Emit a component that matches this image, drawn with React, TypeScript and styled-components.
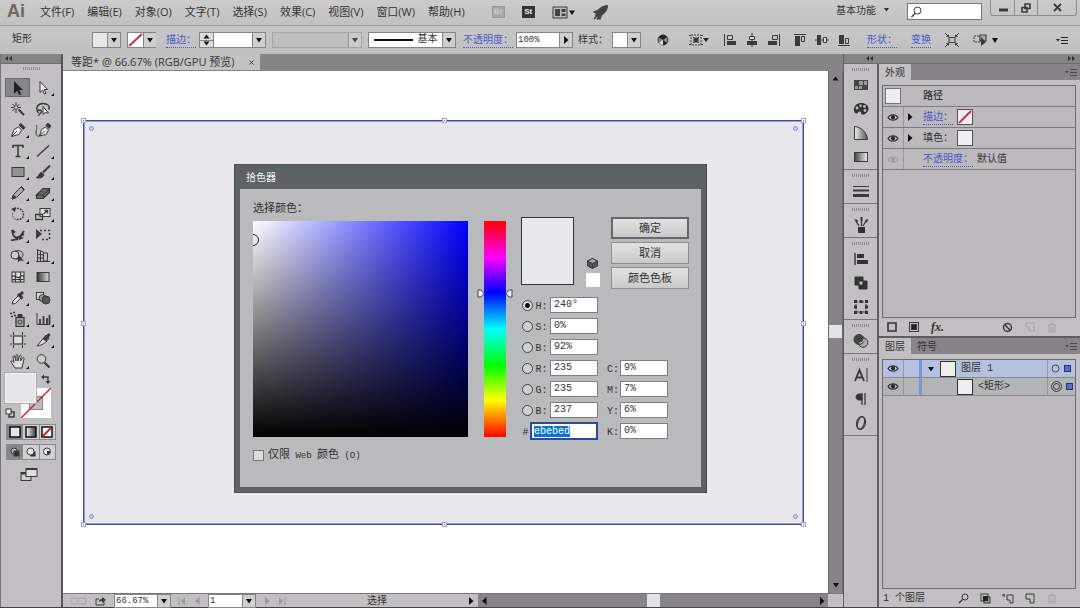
import React, { useEffect, useRef } from 'react';
import styled, { createGlobalStyle, css } from 'styled-components';

const ui = `"Open Sans", "Noto Sans CJK SC", sans-serif`;
const mono = `"Liberation Mono", "Noto Sans CJK SC", monospace`;

const c = {
  bar: '#c3c2c3',
  panel: '#c1bfc1',
  list: '#bbb9bb',
  dark: '#878487',
  line: '#777578',
  ink: '#333',
  link: '#4a57c8',
};

const Global = createGlobalStyle`
  * { box-sizing: border-box; }
  html, body, #root { height: 100%; margin: 0; }
  body { background: ${c.panel}; color: ${c.ink}; font: 10px/14px ${mono}; overflow: hidden; }
  button, input, select { font: inherit; color: inherit; margin: 0; padding: 0; border: 0; border-radius: 0; background: none; }
  button { display: inline-flex; align-items: center; justify-content: center; }
  input { min-width: 0; outline: none; }
  svg { display: block; flex: none; }
  ul { list-style: none; margin: 0; padding: 0; }
`;

/* ---------- icons ---------- */

const Ico = ({ s = 16, w, children }: { s?: number; w?: number; children: React.ReactNode }) => (
  <svg width={w ?? s} height={s} viewBox={`0 0 ${w ?? s} ${s}`} fill="none" stroke="#3a3a3a" strokeWidth="1" aria-hidden="true">
    {children}
  </svg>
);
const K = '#3a3a3a';
const Down = () => <Ico s={6} w={8}><path d="M1 1h6L4 5.500z" fill="#111" stroke="none" /></Ico>;
const Up = () => <Ico s={5} w={7}><path d="M.5 4.500h6L3.500 .5z" fill="#111" stroke="none" /></Ico>;
const Right = ({ color = '#111' }) => <Ico s={8} w={6}><path d="M1 0v8l4.500-4z" fill={color} stroke="none" /></Ico>;
const Left = ({ color = '#111' }) => <Ico s={8} w={6}><path d="M5.500 0v8L1 4z" fill={color} stroke="none" /></Ico>;
const Chevrons = ({ flip = false }) => (
  <Ico s={5} w={8}>
    <path d={flip ? 'M0 0v5l3-2.500zM4 0v5l3-2.500z' : 'M3 0v5L0 2.500zM7 0v5L4 2.500z'} fill="#333" stroke="none" />
  </Ico>
);
const PanelMenu = ({ color = '#4d4b4d' }) => (
  <Ico s={9} w={12}><path d="M0 3h4L2 5.500z" fill={color} stroke="none" /><path d="M5 1.500h7M5 4.500h7M5 7.500h7" stroke={color} /></Ico>
);
const Eye = ({ faint = false }) => (
  <Ico s={9} w={12}>
    <g opacity={faint ? 0.2 : 1}>
      <path d="M1 4.500C3 1 9 1 11 4.500 9 8 3 8 1 4.500z" stroke="#333" strokeWidth="1.200" />
      <circle cx="6" cy="4.300" r="2" fill="#222" stroke="none" />
    </g>
  </Ico>
);

const tools: { name: string; more?: boolean; art: React.ReactNode }[] = [
  { name: '选择工具', art: <path d="M4 1v13l3.200-3.200 2 4.200 2-1-2-4H13z" fill="#222" stroke="none" /> },
  { name: '直接选择工具', more: true, art: <path d="M5 1.500v11l2.600-2.400 1.800 4 1.600-.8-1.800-3.800h3.300z" fill="#eee" /> },
  { name: '魔棒工具', art: <><path d="M8.500 8.500l5.500 5.500" strokeWidth="2" /><path d="M6 1v3M6 9v3M1 6.500h3M8 6.500h3M2.500 3l2 2M9.500 3l-2 2M2.500 10l2-2" /><circle cx="6" cy="6.500" r="1.800" fill="#ddd" /></> },
  { name: '套索工具', art: <><path d="M3.500 12C-.5 7 3 2.500 8 2.500s7.500 3 5.500 6M3 9.500c2-1 4 0 3.500 1.500S3 13 4 15" strokeWidth="1.400" /><path d="M8 5.500v8l2-1.800 3.500.3z" fill="#eee" /></> },
  { name: '钢笔工具', more: true, art: <><path d="M1.500 14.500l2.500-7 4.500-2.500 3 3-2.500 4.500z" fill="#eee" /><path d="M1.500 14.500L7 9" /><path d="M9 3l2-1.500 4 4L13.500 7.500z" fill={K} /></> },
  { name: '曲率工具', art: <><path d="M4.500 14l2-6.500 4-2.500 3 3-2.500 4.500z" fill="#eee" /><path d="M4.500 14l5-5M1 3c2 2 0 5 0 8s2 3.500 3.500 3" /><path d="M11 3.500L13 1l3 3-2 2.500z" fill={K} /></> },
  { name: '文字工具', more: true, art: <path d="M3 5V2.500h10V5M8 2.500v11M5.500 13.500h5" strokeWidth="1.500" /> },
  { name: '直线段工具', more: true, art: <path d="M2 13.500L14 2.500" strokeWidth="1.400" /> },
  { name: '矩形工具', more: true, art: <rect x="2" y="3.500" width="12" height="9" fill="#919191" /> },
  { name: '画笔工具', more: true, art: <><path d="M15 1.500L8 8.500" strokeWidth="2" /><path d="M1 13.500c3 0 2.500-4 5-5l3 2c-.5 3-4.500 4.500-8 3z" fill={K} /></> },
  { name: '铅笔工具', more: true, art: <><path d="M2 14l1.500-4.500 8-8 3 3-8 8z" fill="#aaa" /><path d="M2 14l1.500-4 2.500 2.500zM11 2l3 3" fill={K} /></> },
  { name: '橡皮擦工具', more: true, art: <><path d="M1.500 10L8 3.500h6.500L9 10zM1.500 10v3.500H8L9 10M8 13.500l6.500-6v-4" fill="#666" strokeWidth="1.200" /></> },
  { name: '旋转工具', more: true, art: <><path d="M4 3.500C8 1 13 3 13.500 8S9 14.500 5 13" strokeDasharray="2 1" strokeWidth="1.400" /><path d="M1 3l5-2-1 5z" fill={K} stroke="none" /><path d="M3 6.500c-1.500 3 0 5.500 2 6.500" strokeDasharray="1 1" /></> },
  { name: '比例缩放工具', more: true, art: <><rect x="5" y="2.500" width="10" height="8" fill="#ddd" /><path d="M.5 8.500h7v5h-7zM8.500 8l4-3.500M9.500 4.500h3v3" strokeWidth="1.300" /></> },
  { name: '宽度工具', more: true, art: <><path d="M2 3c1 8 4 10 12 4M1 13c3 1 9-2 13-9M3 8l5 5" strokeWidth="1.800" /><path d="M2 2l4 3-3 2zM9 9l5 2-5 2z" fill={K} stroke="none" /></> },
  { name: '自由变换工具', art: <><path d="M5 3.500h9.500v9H5" strokeDasharray="2 2" strokeWidth="1.500" /><path d="M1 2v10l6-5z" fill={K} stroke="none" /></> },
  { name: '形状生成器工具', more: true, art: <><circle cx="5" cy="7" r="4" fill="#ccc" /><path d="M5 3c6-1 8 1 8 4s-3 4-7 4" /><path d="M8 6v8.500l2-2 4 .5z" fill={K} stroke="none" /></> },
  { name: '透视网格工具', more: true, art: <><path d="M2.500 1v13M2.500 2l6 2v10M5.500 3v10M2.500 6l6 1M2.500 10h6M8.500 5h4v8h-4M1 13.500h14" /></> },
  { name: '网格工具', art: <><rect x="2" y="3" width="12" height="10" fill="#ddd" /><path d="M2 8c3-4 5 3 8 0s4 0 4 0M5 3c3 4-2 6 1 10M10 3c3 4-2 6 1 10M2 11c3-2 8 1 12-1" strokeWidth="1.200" /></> },
  { name: '渐变工具', art: <><defs><linearGradient id="toolGrad"><stop stopColor="#333" /><stop offset="1" stopColor="#ddd" /></linearGradient></defs><rect x="2" y="3.500" width="12" height="9" fill="url(#toolGrad)" /></> },
  { name: '吸管工具', more: true, art: <><path d="M2 14l1-3 6-6 2.500 2.500-6 6z" fill="#ddd" /><path d="M8 4l4.500 4.500M10 5l3-3" strokeWidth="3" /></> },
  { name: '混合工具', art: <><rect x="1.500" y="2.500" width="7" height="7" fill="#ddd" /><circle cx="7.500" cy="8" r="3.500" fill="#999" /><circle cx="11" cy="10" r="4" fill="#555" /></> },
  { name: '符号喷枪工具', more: true, art: <><rect x="6" y="6.500" width="8" height="9" fill="#aaa" strokeWidth="1.300" /><path d="M8 6V3.500h4V6" fill={K} /><circle cx="10" cy="11" r="2" /><path d="M0 2.500h2M3 1.500h2M1 5.500h2M4 4.500h2" strokeWidth="1.300" /></> },
  { name: '柱形图工具', more: true, art: <><path d="M2 2v11.500h13" /><path d="M5 13V8M8.500 13V5M12 13V7M14.500 13V4" strokeWidth="1.800" /></> },
  { name: '画板工具', art: <><rect x="3.500" y="4" width="9" height="8" fill="#ddd" strokeWidth="1.200" /><path d="M3.500 0v3M12.500 0v3M3.500 13v3M12.500 13v3M0 4h2M0 12h2M14 4h2M14 12h2" /></> },
  { name: '切片工具', more: true, art: <><path d="M2 14L11 3l3 3c-2 4-6 7-12 8z" fill="#ddd" /><path d="M8 7l6-5.500 1 1.500-4 6z" fill={K} /></> },
  { name: '抓手工具', more: true, art: <path d="M5 15l-4-6c-.5-1.500 1-1.500 1.500-1L4 9.500 3 4c0-1.500 1.500-1.500 2 0l1 4V2.500c0-1.500 1.700-1.500 1.700 0L8 8l1.500-5c.5-1.500 2-1 1.700.3L10.500 8l2-3c1-1 2 0 1.500 1l-2 9z" fill="#ddd" /> },
  { name: '缩放工具', art: <><circle cx="6.500" cy="6" r="4.300" fill="#ccc" /><path d="M9.500 9.500l5 5" strokeWidth="2.200" /></> },
];

type Dock = { name: string; art: React.ReactNode }[];
const dock: Dock[] = [
  [
    { name: '色板', art: <><rect x="1" y="3" width="14" height="10" fill="#444" stroke="none" /><path d="M6 4h4v4H6zM11 4h3v4h-3zM2 9h3v3H2zM6 9h3v3H6z" fill="#999" stroke="none" /></> },
    { name: '颜色', art: <><path d="M8 2c5 0 8 3 7.500 6.500S11 14 9 13.500s0-3-2-3-2 2.500-4 2C-1 11 .5 2 8 2z" fill="#333" stroke="none" /><g fill="#c1bfc1" stroke="none"><circle cx="4" cy="7" r="1.400" /><circle cx="7.500" cy="4.800" r="1.300" /><circle cx="11.500" cy="5.500" r="1.400" /><circle cx="12" cy="9.500" r="1.400" /></g></> },
    { name: '颜色参考', art: <><defs><linearGradient id="guide"><stop stopColor="#eee" /><stop offset="1" stopColor="#555" /></linearGradient></defs><path d="M1.500 1.500v13h13C14 7 8 2 1.500 1.500z" fill="url(#guide)" /></> },
    { name: '渐变', art: <><defs><linearGradient id="dockGrad"><stop stopColor="#444" /><stop offset="1" stopColor="#eee" /></linearGradient></defs><rect x="1.500" y="3.500" width="13" height="9" fill="url(#dockGrad)" /></> },
  ],
  [{ name: '描边', art: <><path d="M0 3.500h16" /><path d="M0 7.500h16" strokeWidth="2" /><path d="M0 12.500h16" strokeWidth="3" /></> }],
  [{ name: '画笔', art: <><path d="M5 10h7v6H5z" fill="#333" stroke="none" /><path d="M6 9L3 4M8.500 9V4M10 9l3-5" strokeWidth="1.300" /><path d="M1 2l4 1-1 3zM7.500 0h2v4h-2zM12 3l3-1-1 4z" fill="#333" stroke="none" /></> }],
  [
    { name: '对齐', art: <><path d="M2 2v12" strokeWidth="1.500" /><path d="M4 3h7v4H4zM4 9h11v4H4z" fill="#333" stroke="none" /></> },
    { name: '路径查找器', art: <path d="M2 2h8v4h4v8H6v-4H2zM6 6v4h4V6z" fill="#333" fillRule="evenodd" stroke="#333" /> },
    { name: '变换', art: <><rect x="3" y="3" width="10" height="10" strokeDasharray="2 1" /><path d="M1 1h3v3H1zM6.500 1h3v3h-3zM12 1h3v3h-3zM1 6.500h3v3H1zM12 6.500h3v3h-3zM1 12h3v3H1zM6.500 12h3v3h-3zM12 12h3v3h-3z" fill="#333" stroke="none" /></> },
  ],
  [{ name: '透明度', art: <><circle cx="10" cy="9.500" r="4.800" fill="#aaa" /><circle cx="6" cy="6.500" r="5" fill="#444" /><path d="M6 10a5 5 0 0 0 5-4" stroke="#ddd" /></> }],
  [
    { name: '字符', art: <><path d="M2 14L6.500 3l4.500 11M3.500 10.500h6" strokeWidth="1.900" /><path d="M14 1v14" /></> },
    { name: '段落', art: <><path d="M9 3H6C2 3 2 9 6 9h3z" fill="#333" /><path d="M9 2v12M12 2v12" strokeWidth="1.300" /></> },
    { name: 'OpenType', art: <><ellipse cx="8" cy="8" rx="4.500" ry="6.500" transform="rotate(15 8 8)" /><ellipse cx="8" cy="8" rx="3.300" ry="6.300" transform="rotate(15 8 8)" strokeWidth="1.300" /></> },
  ],
];

/* ---------- shell ---------- */

const Label = styled.span`
  padding-top: 2px;
  white-space: nowrap;
`;
const Link = styled.a`
  padding-top: 2px;
  color: ${c.link};
  text-decoration: none;
  border-bottom: 1px dotted ${c.link};
  line-height: 13px;
  white-space: nowrap;
`;

const Shell = styled.div`
  height: 100vh;
  display: flex;
  flex-direction: column;
  border-bottom: 1px solid #444;
`;

const MenuBar = styled.header`
  flex: none;
  height: 26px;
  display: flex;
  align-items: flex-start;
  background: linear-gradient(#cbcbcb, #c0c1c0);
  border-bottom: 1px solid #9c9b9c;
  padding: 0 3px 0 7px;
  font: 11px/16px ${ui};
`;
const Logo = styled.span`
  font: bold 18px/22px "Liberation Sans", sans-serif;
  color: #6c6560;
  width: 33px;
`;
const Menus = styled.nav`
  display: flex;
  gap: 13px;
  padding-top: 4px;
  button { height: 16px; white-space: nowrap; }
`;
const MenuIcons = styled.div`
  display: flex;
  align-items: center;
  height: 24px;
  gap: 17px;
  padding-left: 27px;
`;
const Badge = styled.button<{ $off?: boolean }>`
  width: 13px;
  height: 12px;
  font: bold 8px/10px "Liberation Sans", sans-serif;
  background: ${p => (p.$off ? '#a9a9a9' : '#333')};
  color: ${p => (p.$off ? '#c8c8c8' : '#eee')};
  ${p => p.$off && css`border: 1px solid #999;`}
`;
const Spacer = styled.span`flex: 1;`;
const Workspace = styled.button`
  height: 20px;
  gap: 7px;
  margin-right: 18px;
  font-size: 10px;
`;
const Search = styled.label`
  width: 75px;
  height: 17px;
  margin-top: 3px;
  padding-left: 2px;
  display: flex;
  align-items: center;
  background: #fff;
  border: 1px solid #777;
  input { flex: 1; width: 20px; }
`;
const WinButtons = styled.div`
  display: flex;
  margin-left: 8px;
  height: 16px;
  border: 1px solid #8d8d8d;
  border-top: 0;
  border-radius: 0 0 3px 3px;
  button { width: 23px; }
  button + button { border-left: 1px solid #8d8d8d; }
  button:last-child { width: 39px; }
`;

const Control = styled.div`
  flex: none;
  height: 28px;
  display: flex;
  align-items: center;
  background: linear-gradient(#c8c8c8, #bfbfbf);
  padding: 0 12px;
  white-space: nowrap;
`;
const Group = styled.div<{ $before?: number; $gap?: number }>`
  display: flex;
  align-items: center;
  flex: none;
  gap: ${p => p.$gap ?? 6}px;
  margin-left: ${p => p.$before ?? 0}px;
`;
const Plain = styled.button`height: 16px;`;
const Combo = styled.span<{ $w: number; $off?: boolean }>`
  display: flex;
  width: ${p => p.$w}px;
  height: 16px;
  background: ${p => (p.$off ? '#bdbdbd' : '#fff')};
  border: 1px solid ${p => (p.$off ? '#9a9a9a' : '#858585')};
  font-size: 9px;
  input { flex: 1; width: 10px; padding-left: 1px; }
  opacity: ${p => (p.$off ? 0.7 : 1)};
`;
const Arrow = styled.button`
  width: 13px;
  flex: none;
  background: #cfcfcf;
  border-left: 1px solid #858585;
`;
const Chip = styled.button<{ $tone?: string }>`
  flex: 1;
  background: ${p => p.$tone ?? '#e8e7ea'};
`;
const Spin = styled.span`
  width: 14px;
  flex: none;
  display: flex;
  flex-direction: column;
  border-right: 1px solid #858585;
  background: #ddd;
  button { flex: 1; min-height: 0; }
  button + button { border-top: 1px solid #858585; }
  button + button svg { transform: rotate(180deg); }
`;
const StrokeSample = styled.button`
  flex: 1;
  gap: 5px;
  font-size: 10px;
  &::before { content: ''; width: 39px; height: 2px; background: #111; }
`;

const Work = styled.div`
  flex: 1;
  min-height: 0;
  display: flex;
`;

/* ---------- tool palette ---------- */

const Palette = styled.aside`
  flex: none;
  width: 63px;
  background: ${c.panel};
  border-left: 1px solid #77757a;
  border-right: 2px solid #555457;
  display: flex;
  flex-direction: column;
`;
const DarkStrip = styled.div`
  flex: none;
  height: 10px;
  background: ${c.dark};
  border-bottom: 1px solid #6f6d70;
  padding: 0 4px;
  display: flex;
  align-items: center;
  justify-content: space-between;
`;
const Grip = styled.div`
  width: 17px;
  height: 3px;
  margin: 0 auto;
  background: repeating-linear-gradient(90deg, #8d8b8d 0 1px, transparent 1px 2px);
`;
const Tools = styled.div`
  display: grid;
  grid-template-columns: 25px 25px;
  grid-auto-rows: 21px;
  padding: 7px 4px 0;
`;
const PaletteTop = styled.div`padding-top: 3px;`;
const Tool = styled.button<{ $on?: boolean; $more?: boolean }>`
  position: relative;
  ${p => p.$on && css`background: #858487; box-shadow: inset 0 0 0 1px #6d6b6e; height: 19px; align-self: center;`}
  ${p => p.$more && css`
    &::after {
      content: '';
      position: absolute;
      right: 1px;
      bottom: 2px;
      border-left: 3px solid transparent;
      border-bottom: 3px solid #111;
    }
  `}
`;
const FillStroke = styled.div`
  position: relative;
  height: 47px;
  margin: 2px 5px 0 4px;
`;
const StrokeBox = styled.button`
  position: absolute;
  left: 16px;
  top: 15px;
  width: 30px;
  height: 30px;
  background: #fff;
`;
const FillBox = styled.button`
  position: absolute;
  left: 0;
  top: 0;
  width: 31px;
  height: 30px;
  background: #e6e5e8;
  border: 1px solid #f4f4f4;
  box-shadow: 0 0 0 1px #aaa;
`;
const Swap = styled.button`position: absolute; left: 36px; top: 1px;`;
const Reset = styled.button`position: absolute; left: 0; top: 35px;`;
const ModeRow = styled.div`
  display: flex;
  width: 50px;
  height: 16px;
  margin: 4px 0 0 5px;
  border: 1px solid #8b898c;
  button { flex: 1; }
  button:first-child { background: #858487; }
  button + button { border-left: 1px solid #8b898c; background: #d0cfd1; }
`;
const ScreenMode = styled.button`align-self: center; margin: 7px 4px 0 0;`;

/* ---------- document ---------- */

const Doc = styled.main`
  flex: 1;
  min-width: 0;
  display: flex;
  flex-direction: column;
  background: ${c.dark};
`;
const DocTabs = styled.div`
  flex: none;
  height: 17px;
  display: flex;
`;
const DocTab = styled.div`
  height: 16px;
  padding: 0 6px 0 8px;
  display: flex;
  align-items: center;
  gap: 14px;
  background: ${c.bar};
  font: 11px/16px ${ui};
`;
const View = styled.div`
  flex: 1;
  min-height: 0;
  display: flex;
`;
const Canvas = styled.div`
  position: relative;
  flex: 1;
  display: flex;
  background: #fff;
  padding: 49px 24px 68px 20px;
`;
const Artboard = styled.div`
  position: relative;
  flex: 1;
  background: #e9e9ed;
  box-shadow: inset 0 0 0 1px #464c92, inset 0 0 0 2px #9a9dc4;
`;
const Handle = styled.i<{ $x: number; $y: number }>`
  position: absolute;
  left: ${p => p.$x}%;
  top: ${p => p.$y}%;
  width: 5px;
  height: 5px;
  margin: -2px;
  transform: translate(${p => (p.$x === 100 ? -1 : 0)}px, ${p => (p.$y === 100 ? -1 : 0)}px);
  background: #fff;
  border: 1px solid #9aa0e6;
  &::after { content: ''; position: absolute; inset: 1px; background: #4d57c0; }
`;
const Corner = styled.i<{ $right?: boolean; $bottom?: boolean }>`
  position: absolute;
  ${p => (p.$right ? 'right' : 'left')}: 6px;
  ${p => (p.$bottom ? 'bottom' : 'top')}: 6px;
  width: 5px;
  height: 5px;
  border: 1px solid #8088d8;
  border-radius: 50%;
  background: #cfd1f2;
`;
const VScroll = styled.div`
  flex: none;
  width: 15px;
  display: flex;
  flex-direction: column;
  align-items: center;
  justify-content: space-between;
  border-left: 1px solid #6b696c;
  border-right: 1px solid #6b696c;
  background: ${c.dark};
  padding: 5px 0;
`;
const VThumb = styled.span`width: 13px; height: 13px; background: #e3e2e4;`;
const HScroll = styled.div`
  flex: 1;
  height: 100%;
  display: flex;
  align-items: center;
  justify-content: space-between;
  background: ${c.dark};
  padding: 0 3px;
`;
const HThumb = styled.span`width: 13px; height: 13px; background: #e3e2e4;`;
const Status = styled.footer`
  flex: none;
  height: 14px;
  display: flex;
  align-items: center;
  background: ${c.panel};
  border-top: 1px solid #7b797c;
`;
const StatusInfo = styled.div`
  width: 415px;
  display: flex;
  align-items: center;
  padding: 0 4px 0 7px;
  ${Combo} { height: 14px; }
`;
const ScrollEnd = styled.span`width: 15px; height: 100%; background: ${c.panel};`;

/* ---------- dialog ---------- */

const Dialog = styled.section`
  position: absolute;
  left: 171px;
  top: 93px;
  width: 473px;
  height: 329px;
  display: flex;
  flex-direction: column;
  background: #5d6265;
  border: 1px solid #4b4f52;
  padding: 0 5px 5px;
`;
const DialogTitle = styled.h1`
  margin: 0;
  height: 24px;
  padding: 0 6px;
  font: 10px/24px ${ui};
  color: #f0f0f0;
`;
const DialogBody = styled.form`
  flex: 1;
  display: flex;
  align-items: flex-start;
  padding-left: 13px;
  background: #b9babb;
  font-size: 10px;
`;
const Caption = styled.p`
  margin: 0;
  height: 32px;
  padding-top: 13px;
  font-size: 11px;
`;
const Field = styled.div`
  position: relative;
  width: 215px;
  height: 216px;
  overflow: hidden;
  background: linear-gradient(to top, #000, transparent), linear-gradient(to right, #fff, #00f);
  &::after {
    content: '';
    position: absolute;
    left: -6px;
    top: 13px;
    width: 10px;
    height: 10px;
    border: 1px solid #222;
    border-radius: 50%;
  }
`;
const WebOnly = styled.label`
  display: flex;
  align-items: center;
  gap: 4px;
  margin-top: 11px;
  font-size: 11px;
  input { appearance: none; width: 11px; height: 11px; border: 1px solid #777; background: #ddd; }
  span span { font-size: 9px; }
`;
const Hue = styled.div`
  position: relative;
  width: 22px;
  height: 216px;
  margin: 32px 0 0 16px;
  background: linear-gradient(#f00, #f0f 17%, #00f 33%, #0ff 50%, #0f0 67%, #ff0 83%, #f00);
  svg { position: absolute; top: 68px; left: -7px; }
  svg + svg { left: 21px; transform: scaleX(-1); }
`;
const Side = styled.div`padding: 28px 0 0 15px;`;
const SideTop = styled.div`
  display: flex;
  height: 80px;
`;
const Preview = styled.div`
  width: 53px;
  height: 68px;
  background: #e8e9eb;
  border: 1px solid #333;
`;
const Warn = styled.div`
  width: 15px;
  height: 70px;
  margin: 0 11px;
  display: flex;
  flex-direction: column;
  justify-content: flex-end;
  align-items: center;
  gap: 4px;
  i { width: 14px; height: 14px; background: #fff; }
`;
const Actions = styled.div`
  display: flex;
  flex-direction: column;
  gap: 3px;
`;
const Action = styled.button<{ $main?: boolean }>`
  width: 78px;
  height: 22px;
  padding-top: 1px;
  font-size: 11px;
  background: linear-gradient(#e2e2e2, #c9c9c9);
  border: ${p => (p.$main ? '2px solid #66696b' : '1px solid #8c8e90')};
`;
const Fields = styled.div`
  display: flex;
  align-items: flex-end;
  gap: 8px;
`;
const Column = styled.div`
  display: flex;
  flex-direction: column;
  align-items: flex-end;
  gap: 5px;
`;
const Entry = styled.label`
  display: flex;
  align-items: center;
  height: 16px;
`;
const EntryName = styled.span<{ $w: number }>`
  width: ${p => p.$w}px;
  padding-top: 3px;
  text-align: center;
`;
const Num = styled.input`
  width: 48px;
  height: 16px;
  background: #fff;
  border: 1px solid #7d7f80;
  padding: 0 0 1px 3px;
`;
const Hex = styled(Num)`
  width: 68px;
  height: 18px;
  border: 2px solid #2c4a9c;
  padding: 0 2px;
  &::selection { background: #0a74d4; color: #fff; }
`;
const Radio = styled.input`
  appearance: none;
  width: 11px;
  height: 11px;
  border: 1px solid #444;
  border-radius: 50%;
  background: #cfd0d0;
  &:checked { background: radial-gradient(#111 0 2px, #ddd 3px); }
`;

/* ---------- right side ---------- */

const RightSide = styled.div`
  flex: none;
  width: 237px;
  display: flex;
  flex-direction: column;
  border-left: 1px solid #605e61;
`;
const SideHead = styled(DarkStrip)`padding: 0 4px 0 22px;`;
const SideCols = styled.div`flex: 1; min-height: 0; display: flex;`;
const DockCol = styled.div`
  flex: none;
  width: 35px;
  background: ${c.panel};
  border-right: 2px solid #5e5c5f;
`;
const DockGroup = styled.div`
  display: flex;
  flex-direction: column;
  border-bottom: 1px solid #777578;
  padding-top: 4px;
  button { height: 24px; }
  ${Grip} { margin-bottom: 2px; }
`;
const Panels = styled.div`flex: 1; min-width: 0; display: flex; flex-direction: column;`;
const Panel = styled.section<{ $grow?: boolean }>`
  flex: ${p => (p.$grow ? '1' : '0 0 272px')};
  min-height: 0;
  display: flex;
  flex-direction: column;
  background: ${c.panel};
  & + & { border-top: 2px solid #5e5c5f; }
`;
const TabRow = styled.div`
  flex: none;
  height: 16px;
  display: flex;
  align-items: center;
  background: ${c.dark};
  padding-right: 3px;
`;
const Tab = styled.button<{ $on?: boolean }>`
  height: 16px;
  width: 32px;
  font: 10px/16px ${ui};
  background: ${p => (p.$on ? c.panel : 'transparent')};
`;
const List = styled.div`
  flex: 1;
  margin: 5px 4px 0 3px;
  border: 1px solid #6d6b6e;
  background: ${c.list};
`;
const Row = styled.div`
  display: flex;
  align-items: center;
  height: 21px;
  border-bottom: 1px solid #7d7b7e;
`;
const HeadRow = styled(Row)`padding-left: 2px; gap: 22px;`;
const EyeCell = styled.button`
  width: 21px;
  height: 100%;
  border-right: 1px solid #99979a;
`;
const Title = styled.strong`padding-top: 2px; font-weight: 500;`;
const Thumb = styled.span<{ $edge?: string }>`
  width: 16px;
  height: 16px;
  flex: none;
  background: #eeedf0;
  border: 1px solid ${p => p.$edge ?? '#8a888b'};
`;
const Twist = styled.button`width: 12px; height: 16px;`;
const RowText = styled.span`display: flex; align-items: center; gap: 4px; margin-left: 7px;`;
const Foot = styled.div`
  flex: none;
  height: 18px;
  display: flex;
  align-items: center;
  justify-content: space-between;
  padding: 0 23px 0 4px;
  white-space: nowrap;
`;
const Fx = styled.button`
  font: italic bold 12px/14px "Liberation Serif", serif;
`;
const LayerRow = styled.li<{ $on?: boolean }>`
  display: flex;
  align-items: center;
  height: 18px;
  border-bottom: 1px solid #8b898c;
  background: ${p => (p.$on ? '#b3c1df' : '#b3b4b6')};
`;
const LockCell = styled.button`
  width: 18px;
  height: 100%;
  border-right: 3px solid #7894dc;
`;
const LayerName = styled.span<{ $indent: number }>`
  flex: 1;
  display: flex;
  align-items: center;
  gap: 5px;
  padding-left: ${p => p.$indent}px;
`;
const Target = styled.span`
  width: 28px;
  height: 100%;
  display: flex;
  align-items: center;
  gap: 4px;
  padding-left: 3px;
  border-left: 1px solid #99979a;
  i { width: 7px; height: 7px; background: #5a6bd0; border: 1px solid #27346f; }
`;

const menus = ['文件(F)', '编辑(E)', '对象(O)', '文字(T)', '选择(S)', '效果(C)', '视图(V)', '窗口(W)', '帮助(H)'];

const alignIcons: [string, React.ReactNode][] = [
  ['左对齐', <><path d="M1.500 1v12" /><path d="M4.500 2.500h5v4h-5z" /><path d="M4 8h9v4H4z" fill={K} stroke="none" /></>],
  ['水平居中', <><path d="M7 0v14" /><path d="M4.500 3.500h5v3h-5z" fill="#ddd" /><path d="M2 8h10v4H2z" fill={K} stroke="none" /></>],
  ['右对齐', <><path d="M12.500 1v12" /><path d="M5.500 2.500h5v4h-5z" /><path d="M1 8h9v4H1z" fill={K} stroke="none" /></>],
  ['顶对齐', <><path d="M1 1.500h12" /><path d="M8.500 3.500h3v5h-3z" /><path d="M2 3h5v10H2z" fill={K} stroke="none" /></>],
  ['垂直居中', <><path d="M0 7h14" /><path d="M8.500 4.500h3v5h-3z" fill="#ddd" /><path d="M2 2h4v10H2z" fill={K} stroke="none" /></>],
  ['底对齐', <><path d="M1 12.500h12" /><path d="M8.500 5.500h3v5h-3z" /><path d="M2 2h5v9H2z" fill={K} stroke="none" /></>],
];

const NoneSlash = ({ w = 15, h = 14 }) => (
  <svg width={w} height={h} viewBox={`0 0 ${w} ${h}`}><path d={`M1 ${h - 1}L${w - 1} 1`} stroke="#c8284c" strokeWidth="1.800" /></svg>
);

function MenuRow() {
  return (
    <MenuBar>
      <Logo>Ai</Logo>
      <Menus>{menus.map(m => <button key={m}>{m}</button>)}</Menus>
      <MenuIcons>
        <Badge $off>Br</Badge>
        <Badge>St</Badge>
        <button aria-label="排列文档">
          <Ico s={13} w={24}>
            <rect x="1" y="1" width="14" height="11" fill="#bbb" />
            <path d="M3 3h5v7H3zM9.500 3h4v3h-4zM9.500 7.500h4V10h-4z" fill="#444" stroke="none" />
            <path d="M17 4.500h6L20 9z" fill="#111" stroke="none" />
          </Ico>
        </button>
        <button aria-label="GPU 性能">
          <Ico s={15} w={15}>
            <path d="M14.500.5C10 .5 7 3 5 5L.5 7l3 1.500L2.500 11l2 .5 2.500 3 1.500-4C12 8 14.500 5 14.500.5z" fill="#444" stroke="#444" />
            <path d="M1 14l3-3M4 14.500l2-2" strokeWidth="1.500" />
          </Ico>
        </button>
      </MenuIcons>
      <Spacer />
      <Workspace>基本功能 <Ico s={4} w={6}><path d="M1 0h5L3.500 3.500z" fill="#333" stroke="none" /></Ico></Workspace>
      <Search>
        <Ico s={12} w={13}><circle cx="7.500" cy="4.500" r="3.500" /><path d="M5 7.500L1.500 11" strokeWidth="1.500" /></Ico>
        <input aria-label="搜索" />
      </Search>
      <WinButtons>
        <button aria-label="最小化"><Ico s={10} w={10}><path d="M1 7h9" strokeWidth="3" /></Ico></button>
        <button aria-label="还原"><Ico s={10} w={10}><path d="M4 1h5v4.500H4zM1 4.500h5V9H1z" strokeWidth="1.600" /></Ico></button>
        <button aria-label="关闭"><Ico s={9} w={9}><path d="M1 1l7 7M8 1L1 8" strokeWidth="1.800" /></Ico></button>
      </WinButtons>
    </MenuBar>
  );
}

function ControlBar() {
  return (
    <Control>
      <span>矩形</span>
      <Group $before={60} $gap={6}>
        <Combo $w={29}><Chip aria-label="填色" /><Arrow aria-label="填色选项"><Down /></Arrow></Combo>
        <Combo $w={29}><Chip $tone="#fff" aria-label="描边色"><NoneSlash /></Chip><Arrow aria-label="描边选项"><Down /></Arrow></Combo>
      </Group>
      <Group $before={10} $gap={3}>
        <Link href="#stroke">描边：</Link>
        <Combo $w={67}>
          <Spin><button aria-label="增加"><Up /></button><button aria-label="减少"><Up /></button></Spin>
          <input aria-label="描边粗细" /><Arrow aria-label="粗细列表"><Down /></Arrow>
        </Combo>
      </Group>
      <Group $before={6}>
        <Combo $w={90} $off><input disabled aria-label="变量宽度" /><Arrow disabled aria-label="宽度配置"><Down /></Arrow></Combo>
        <Combo $w={88}><StrokeSample>基本</StrokeSample><Arrow aria-label="画笔列表"><Down /></Arrow></Combo>
      </Group>
      <Group $before={7} $gap={3}>
        <Link href="#opacity">不透明度：</Link>
        <Combo $w={57}><input aria-label="不透明度" defaultValue="100%" /><Arrow aria-label="不透明度滑块"><Right /></Arrow></Combo>
      </Group>
      <Group $before={5} $gap={4}>
        <Label>样式：</Label>
        <Combo $w={29}><Chip $tone="#fff" aria-label="图形样式" /><Arrow aria-label="样式列表"><Down /></Arrow></Combo>
      </Group>
      <Group $before={16} $gap={20}>
        <Plain aria-label="重新着色">
          <Ico s={12} w={12}><circle cx="6" cy="6" r="5" fill="#888" /><path d="M6 6L1.500 3.500A5 5 0 0 1 10 3zM6 6v5a5 5 0 0 0 4-2z" fill="#222" stroke="none" /><path d="M6 6l-4 3a5 5 0 0 0 4 2z" fill="#ddd" stroke="none" /></Ico>
        </Plain>
        <Plain aria-label="对齐到">
          <Ico s={14} w={20}><rect x="2" y="2" width="10" height="10" strokeDasharray="2 1" /><path d="M0 2.500h2M12 2.500h2M0 11.500h2M12 11.500h2M4 4l6 6M10 4l-6 6" /><rect x="5" y="5" width="4" height="4" fill={K} /><path d="M14 5h6l-3 4z" fill="#222" stroke="none" /></Ico>
        </Plain>
      </Group>
      <Group $before={14} $gap={8}>
        {alignIcons.slice(0, 3).map(([n, a]) => <Plain key={n} aria-label={n}><Ico s={14}>{a}</Ico></Plain>)}
      </Group>
      <Group $before={12} $gap={8}>
        {alignIcons.slice(3).map(([n, a]) => <Plain key={n} aria-label={n}><Ico s={14}>{a}</Ico></Plain>)}
      </Group>
      <Group $before={16} $gap={14}>
        <Link href="#shape">形状：</Link>
        <Link href="#transform">变换</Link>
        <Plain aria-label="隔离选中的对象">
          <Ico s={14}><rect x="4" y="4.500" width="6" height="5" /><path d="M0 0l4 4M14 0l-4 4M0 14l4-4M14 14l-4-4" /><path d="M4 1v3H1zM10 1v3h3zM4 13v-3H1zM10 13v-3h3z" fill={K} stroke="none" /></Ico>
        </Plain>
        <Plain aria-label="选择类似的对象">
          <Ico s={14} w={25}><rect x="1" y="3" width="6" height="6" strokeDasharray="2 1" /><rect x="7" y="2" width="6" height="6" fill="#aaa" /><path d="M8 4v9l5-4z" fill={K} stroke="none" /><path d="M19 5h6l-3 5z" fill="#111" stroke="none" /></Ico>
        </Plain>
      </Group>
      <Spacer />
      <PanelMenu color="#222" />
    </Control>
  );
}

function ToolPalette() {
  return (
    <Palette>
      <DarkStrip><Chevrons /></DarkStrip>
      <PaletteTop><Grip /></PaletteTop>
      <Tools>
        {tools.map((t, i) => (
          <Tool key={t.name} aria-label={t.name} $on={i === 0} $more={t.more}>
            <Ico s={16}>{t.art}</Ico>
          </Tool>
        ))}
      </Tools>
      <FillStroke>
        <StrokeBox aria-label="描边">
          <Ico s={30}><rect x="8.500" y="8.500" width="13" height="13" fill="#bbb" stroke="#888" /><path d="M0 30L30 0" stroke="#d02038" strokeWidth="1.500" /></Ico>
        </StrokeBox>
        <FillBox aria-label="填色" />
        <Swap aria-label="互换填色和描边"><Ico s={10}><path d="M2 3h5v5" strokeWidth="1.300" /><path d="M3 .5v5L0 3zM4.500 7h5L7 10z" fill={K} stroke="none" /></Ico></Swap>
        <Reset aria-label="默认填色和描边"><Ico s={10}><rect x="4" y="4" width="5" height="5" strokeWidth="1.500" /><rect x="1" y="1" width="5" height="5" fill="#eee" /></Ico></Reset>
      </FillStroke>
      <ModeRow>
        <button aria-label="颜色"><Ico s={12}><rect x="1" y="1" width="10" height="10" fill="#e6e5e8" stroke="#111" strokeWidth="1.500" /></Ico></button>
        <button aria-label="渐变"><Ico s={12}><defs><linearGradient id="mode"><stop stopColor="#fff" /><stop offset="1" stopColor="#333" /></linearGradient></defs><rect x="1" y="1" width="10" height="10" fill="url(#mode)" stroke="#111" strokeWidth="1.500" /></Ico></button>
        <button aria-label="无"><Ico s={12}><rect x="1" y="1" width="10" height="10" fill="#fff" stroke="#111" strokeWidth="1.500" /><path d="M2 10l8-8" stroke="#c8202c" strokeWidth="2" /></Ico></button>
      </ModeRow>
      <ModeRow>
        <button aria-label="正常绘图"><Ico s={10}><circle cx="4" cy="4" r="3" fill="#bbb" /><rect x="4" y="4" width="5" height="5" fill="#333" /></Ico></button>
        <button aria-label="背面绘图"><Ico s={10}><rect x="5" y="5" width="4" height="4" fill="#333" /><circle cx="4.500" cy="4.500" r="3.500" fill="#eee" /></Ico></button>
        <button aria-label="内部绘图"><Ico s={10}><circle cx="5" cy="4.500" r="3.500" fill="#eee" /><path d="M5 4h3a3 3 0 0 1-3 3.500z" fill="#333" stroke="none" /></Ico></button>
      </ModeRow>
      <ScreenMode aria-label="更改屏幕模式">
        <Ico s={15} w={18}><rect x="1" y="5.500" width="10" height="8" fill="#ccc" /><path d="M1 6.500h6" strokeWidth="2" /><rect x="6" y="1.500" width="11" height="8" fill="#ddd" /><path d="M6 2h11" strokeWidth="2" /></Ico>
      </ScreenMode>
    </Palette>
  );
}

function ColorPicker() {
  const hex = useRef<HTMLInputElement>(null);
  useEffect(() => {
    hex.current?.focus();
    hex.current?.select();
  }, []);
  const left: [string, string][] = [['H', '240°'], ['S', '0%'], ['B', '92%'], ['R', '235'], ['G', '235'], ['B', '237']];
  const right: [string, string][] = [['C', '9%'], ['M', '7%'], ['Y', '6%'], ['K', '0%']];
  return (
    <Dialog role="dialog" aria-label="拾色器">
      <DialogTitle>拾色器</DialogTitle>
      <DialogBody>
        <div>
          <Caption>选择颜色：</Caption>
          <Field />
          <WebOnly><input type="checkbox" /><span>仅限<span> Web </span>颜色<span> (O)</span></span></WebOnly>
        </div>
        <Hue>
          {[0, 1].map(k => (
            <Ico key={k} s={9} w={8}><path d="M1 1h3l3 3.500L4 8H1z" fill="#eee" stroke="#444" /></Ico>
          ))}
        </Hue>
        <Side>
          <SideTop>
            <Preview />
            <Warn>
              <Ico s={11} w={11}><path d="M5.500.5l5 2.500v5l-5 2.500-5-2.500V3z" fill="#555" /><path d="M.5 3l5 2.500 5-2.500-5-2.500z" fill="#aaa" /><path d="M5.500 5.500v5" /></Ico>
              <i />
            </Warn>
            <Actions>
              <Action type="button" $main>确定</Action>
              <Action type="button">取消</Action>
              <Action type="button">颜色色板</Action>
            </Actions>
          </SideTop>
          <Fields>
            <Column>
              {left.map(([l, v], i) => (
                <Entry key={i}>
                  <Radio type="radio" name="model" defaultChecked={i === 0} aria-label={l} />
                  <EntryName $w={17}>{l}:</EntryName>
                  <Num defaultValue={v} />
                </Entry>
              ))}
              <Entry><EntryName $w={9}>#</EntryName><Hex ref={hex} defaultValue="ebebed" /></Entry>
            </Column>
            <Column>
              {right.map(([l, v]) => (
                <Entry key={l}><EntryName $w={14}>{l}:</EntryName><Num defaultValue={v} /></Entry>
              ))}
            </Column>
          </Fields>
        </Side>
      </DialogBody>
    </Dialog>
  );
}

function Document() {
  return (
    <Doc>
      <DocTabs>
        <DocTab>等距* @ 66.67% (RGB/GPU 预览)
          <button aria-label="关闭文档"><Ico s={5} w={5}><path d="M.5.5l4 4M4.500.5l-4 4" /></Ico></button>
        </DocTab>
      </DocTabs>
      <View>
        <Canvas>
          <Artboard>
            {[[0, 0], [50, 0], [100, 0], [0, 50], [100, 50], [0, 100], [50, 100], [100, 100]].map(([x, y]) => (
              <Handle key={`${x}-${y}`} $x={x} $y={y} />
            ))}
            <Corner /><Corner $right /><Corner $bottom /><Corner $right $bottom />
          </Artboard>
          <ColorPicker />
        </Canvas>
        <VScroll>
          <Up /><VThumb /><Down />
        </VScroll>
      </View>
      <Status>
        <StatusInfo>
          <Ico s={9} w={18}><path d="M1 2h6v6H1zM9 2h7v6H9z" stroke="#a8a6a8" /></Ico>
          <Group $before={7} $gap={8}>
            <Ico s={10} w={11}><path d="M4 3H1v6h8V6" /><path d="M4 6c0-2 1-3 3-3V1l4 3-4 3V5C6 5 5 5 4 6z" fill={K} stroke="none" /></Ico>
            <Combo $w={57}><input aria-label="缩放" defaultValue="66.67%" /><Arrow aria-label="缩放列表"><Down /></Arrow></Combo>
          </Group>
          <Group $before={7} $gap={8}>
            <Ico s={8} w={8}><path d="M1 0v8" stroke="#999" /><path d="M7 0v8L3 4z" fill="#999" stroke="none" /></Ico>
            <Left color="#999" />
            <Combo $w={48}><input aria-label="画板" defaultValue="1" /><Arrow aria-label="画板列表"><Down /></Arrow></Combo>
            <Right color="#999" />
            <Ico s={8} w={8}><path d="M7 0v8" stroke="#999" /><path d="M1 0v8l4-4z" fill="#999" stroke="none" /></Ico>
          </Group>
          <Spacer /><Label>选择</Label><Spacer />
          <Right />
        </StatusInfo>
        <HScroll><Left /><HThumb /><Right /></HScroll>
        <ScrollEnd />
      </Status>
    </Doc>
  );
}

const Trash = () => <Ico s={11} w={10}><path d="M1 3h8M3.500 3V1.500h3V3M2 4v6h6V4M4 5v4M6 5v4" stroke="#a5a3a6" /></Ico>;

function SidePanels() {
  return (
    <RightSide>
      <SideHead><Chevrons /><Chevrons flip /></SideHead>
      <SideCols>
        <DockCol>
          {dock.map((g, i) => (
            <DockGroup key={i}>
              <Grip />
              {g.map(d => <button key={d.name} aria-label={d.name}><Ico s={16}>{d.art}</Ico></button>)}
            </DockGroup>
          ))}
        </DockCol>
        <Panels>
          <Panel>
            <TabRow><Tab $on>外观</Tab><Spacer /><PanelMenu /></TabRow>
            <List>
              <HeadRow><Thumb $edge="#777" /><Title>路径</Title></HeadRow>
              <Row>
                <EyeCell aria-label="显示描边"><Eye /></EyeCell><Twist aria-label="展开描边"><Right /></Twist>
                <RowText><Link href="#row-stroke">描边：</Link><Thumb $edge="#555"><NoneSlash w={14} h={14} /></Thumb></RowText>
              </Row>
              <Row>
                <EyeCell aria-label="显示填色"><Eye /></EyeCell><Twist aria-label="展开填色"><Right /></Twist>
                <RowText><Label>填色：</Label><Thumb $edge="#555" /></RowText>
              </Row>
              <Row>
                <EyeCell aria-label="显示不透明度"><Eye faint /></EyeCell>
                <Twist as="span" />
                <RowText><Link href="#row-opacity">不透明度：</Link><Label>默认值</Label></RowText>
              </Row>
            </List>
            <Foot>
              <Group $before={4} $gap={12}>
                <Ico s={10} w={10}><rect x="1" y="1" width="8" height="8" strokeWidth="1.600" /></Ico>
                <Ico s={10} w={10}><rect x=".5" y=".5" width="9" height="9" /><rect x="2.500" y="2.500" width="5" height="5" fill="#222" /></Ico>
                <Fx>fx.</Fx>
              </Group>
              <Group $gap={12}>
                <Ico s={11} w={11}><circle cx="5.500" cy="5.500" r="4" strokeWidth="1.500" /><path d="M2.500 2.500l6 6" strokeWidth="1.500" /></Ico>
                <Ico s={10} w={10}><path d="M1 1h8v8H4V5H1z" stroke="#a5a3a6" /></Ico>
                <Trash />
              </Group>
            </Foot>
          </Panel>
          <Panel $grow>
            <TabRow><Tab $on>图层</Tab><Tab>符号</Tab><Spacer /><PanelMenu /></TabRow>
            <List as="ul">
              <LayerRow $on>
                <EyeCell aria-label="显示图层"><Eye /></EyeCell><LockCell aria-label="锁定图层" />
                <LayerName $indent={5}>
                  <button aria-label="折叠图层"><Down /></button>
                  <Thumb $edge="#333" />图层 1
                </LayerName>
                <Target><Ico s={9} w={9}><circle cx="4.500" cy="4.500" r="3.500" stroke="#445" /></Ico><i /></Target>
              </LayerRow>
              <LayerRow>
                <EyeCell aria-label="显示矩形"><Eye /></EyeCell><LockCell aria-label="锁定矩形" />
                <LayerName $indent={35}><Thumb $edge="#333" />&lt;矩形&gt;</LayerName>
                <Target><Ico s={11} w={11}><circle cx="5.500" cy="5.500" r="5" /><circle cx="5.500" cy="5.500" r="3" /></Ico><i /></Target>
              </LayerRow>
            </List>
            <Foot>
              <Label>1 个图层</Label>
              <Group $gap={11}>
                <Ico s={11} w={11}><circle cx="7" cy="4" r="3" /><path d="M4.500 6.500L1 10" strokeWidth="1.500" /></Ico>
                <Ico s={11} w={11}><rect x="1" y="1" width="7" height="7" /><rect x="4" y="4" width="6" height="6" fill="#999" /><rect x="3" y="3" width="5" height="5" fill="#222" stroke="none" /></Ico>
                <Ico s={11} w={12}><path d="M0 2h3M2 1v3M5 2h6v8H8V7H5z" /></Ico>
                <Ico s={11} w={11}><path d="M1 1h8v9H5V6H1z" /></Ico>
                <Trash />
              </Group>
            </Foot>
          </Panel>
        </Panels>
      </SideCols>
    </RightSide>
  );
}

export default function App() {
  return (
    <>
      <Global />
      <Shell>
        <MenuRow />
        <ControlBar />
        <Work>
          <ToolPalette />
          <Document />
          <SidePanels />
        </Work>
      </Shell>
    </>
  );
}
